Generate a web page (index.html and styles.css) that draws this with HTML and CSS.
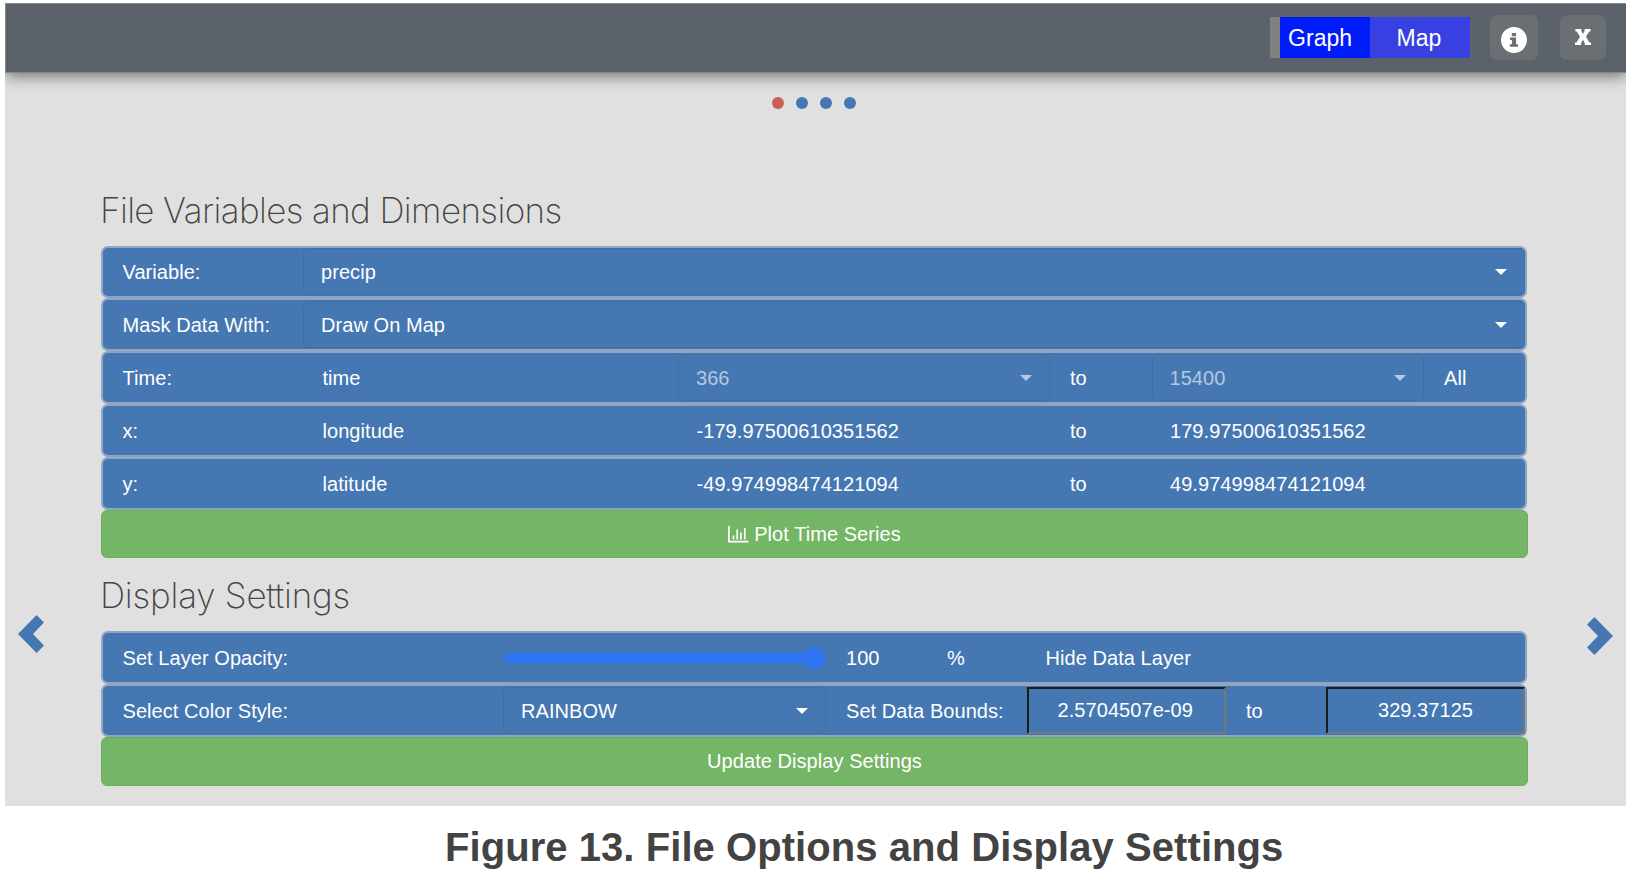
FILE: index.html
```html
<!DOCTYPE html>
<html lang="en">
<head>
<meta charset="utf-8">
<title>File Options and Display Settings</title>
<link rel="stylesheet" href="styles.css">
</head>
<body>
<main class="panel">
  <header class="topbar">
    <div class="toggle">
      <span class="toggle-graph">Graph</span>
      <span class="toggle-map">Map</span>
    </div>
    <button class="icon-btn info-btn" aria-label="Info">
      <svg width="26" height="26" viewBox="0 0 26 26"><circle cx="13" cy="13" r="13" fill="#fff"/><path d="M10.8 6h4.3v3.2h-4.3zM9 10.6h6.1v6.6H17v2.5H8.8v-2.5h2.1v-4.1H9z" fill="#6a6f73"/></svg>
    </button>
    <button class="icon-btn close-btn" aria-label="Close">
      <svg width="16" height="16" viewBox="0 0 16 16"><path d="M0.4 0h6v2L8 4.9 9.6 2V0h5.9v2.4h-1.3L11 7.8l3.4 5.6H16V16H9.8v-2L8 10.8 6.2 14v2H0v-2.6h1.5L5 7.8 1.8 2.4H.4z" fill="#fff"/></svg>
    </button>
  </header>

  <nav class="dots"><i class="dot dot-active"></i><i class="dot"></i><i class="dot"></i><i class="dot"></i></nav>

  <div class="slide">
    <svg class="arrow arrow-prev" width="26" height="38" viewBox="0 0 26 38"><path d="M18.6 0L26 7.6 15 19l11 11.4-7.4 7.6L0 19z"/></svg>
    <div class="content">
      <h2>File Variables and Dimensions</h2>
      <div class="row row-select">
        <span class="label">Variable:</span>
        <div class="select">precip<i class="caret"></i></div>
      </div>
      <div class="row row-select">
        <span class="label">Mask Data With:</span>
        <div class="select">Draw On Map<i class="caret"></i></div>
      </div>
      <div class="row row-dim">
        <span class="label">Time:</span><span class="label">time</span>
        <div class="select disabled">366<i class="caret"></i></div>
        <span class="to">to</span>
        <div class="select disabled">15400<i class="caret"></i></div>
        <span class="to">All</span>
      </div>
      <div class="row row-dim">
        <span class="label">x:</span><span class="label">longitude</span>
        <span class="value">-179.97500610351562</span><span class="to">to</span><span class="value">179.97500610351562</span>
      </div>
      <div class="row row-dim">
        <span class="label">y:</span><span class="label">latitude</span>
        <span class="value">-49.974998474121094</span><span class="to">to</span><span class="value">49.974998474121094</span>
      </div>
      <button class="action">
        <svg width="21" height="17" viewBox="0 0 21 17"><path d="M.9 0v15.6H20.5M5.5 13.4V9.4M9.2 13.4V3.5M12.9 13.4V6.5M16.8 13.4V2" fill="none" stroke="#fff" stroke-width="1.7"/></svg>
        <span>Plot Time Series</span>
      </button>

      <h2 class="second">Display Settings</h2>
      <div class="row row-opacity">
        <span class="label">Set Layer Opacity:</span>
        <div class="slider"><i class="thumb"></i></div>
        <span class="to">100</span><span class="to">%</span><span class="to">Hide Data Layer</span>
      </div>
      <div class="row row-style">
        <span class="label">Select Color Style:</span>
        <div class="select">RAINBOW<i class="caret"></i></div>
        <span class="to">Set Data Bounds:</span>
        <div class="bound">2.5704507e-09</div>
        <span class="to">to</span>
        <div class="bound">329.37125</div>
      </div>
      <button class="action">Update Display Settings</button>
    </div>
    <svg class="arrow arrow-next" width="26" height="38" viewBox="0 0 26 38"><path d="M7.4 0L0 7.6 11 19 0 30.4 7.4 38 26 19z"/></svg>
  </div>
</main>
<p class="caption">Figure 13. File Options and Display Settings</p>
</body>
</html>
```
FILE: styles.css
```css
* { box-sizing: border-box; }
body {
  margin: 0;
  width: 1634px;
  height: 884px;
  overflow: hidden;
  background: #fff;
  color: #fff;
  font: 20px/1 "Liberation Sans", Arial, sans-serif;
  letter-spacing: .06px;
}
button { border: 0; padding: 0; color: inherit; font: inherit; letter-spacing: inherit; }
.panel { width: 1621px; height: 803px; margin: 3px 0 0 5px; background: #e0e0e0; }
.topbar {
  display: flex;
  align-items: flex-start;
  justify-content: flex-end;
  height: 70px;
  padding: 11px 20px 0 0;
  background: #5b6269;
  border: 1px solid #85898d;
  border-right: 0;
  box-shadow: 0 3px 14px rgba(0, 0, 0, .5);
  clip-path: inset(0 0 -30px 0);
}
.toggle { display: flex; height: 41px; margin: 2px 20px 0 0; border-left: 10px solid #808080; font-size: 23px; line-height: 42px; }
.toggle-graph { width: 90px; padding-left: 8px; background: #001cf8; }
.toggle-map { width: 100px; padding-right: 2px; text-align: center; background: #3840e2; }
.icon-btn { display: flex; justify-content: center; height: 45px; border-radius: 7px; background: #6a6f73; }
.info-btn { width: 48px; margin-right: 22px; padding-top: 12px; }
.close-btn { width: 46px; padding-top: 14px; }

.dots { display: flex; justify-content: center; gap: 12px; height: 92px; padding: 24px 0 0 0; margin-left: -3px; }
.dot { width: 12px; height: 12px; border-radius: 50%; background: #4577b2; }
.dot-active { background: #cb5f53; }

.slide { display: flex; }
.arrow { flex: none; fill: #4577b2; }
.arrow-prev { margin: 450px 57px 0 13px; }
.arrow-next { margin: 452px 0 0 60px; }
.content { width: 1426px; }
h2 {
  margin: 0 0 0 -1px;
  height: 80.5px;
  padding-top: 25px;
  color: #444;
  font: 200 35px/40px Inter, "Liberation Sans", sans-serif;
  letter-spacing: -.62px;
  white-space: nowrap;
}
h2.second { height: 73px; padding-top: 17px; letter-spacing: -.2px; }

.row {
  display: grid;
  align-items: center;
  height: 52.9px;
  background: #4577b2;
  border: 2px solid #8fa5c2;
  border-radius: 7px;
}
.row-select { grid-template-columns: 200px 1fr; }
.row-dim { grid-template-columns: 200px 375px 372px 101.5px 272.5px 1fr; }
.row-opacity { grid-template-columns: 400px 323px 101px 98.5px 1fr; }
.row-style { grid-template-columns: 400px 323px 200.5px 199.5px 100px 199px; }
.label { padding-left: 19.5px; }
.to { padding-left: 20px; }
.value { padding-left: 18.5px; }
.select {
  display: flex;
  align-items: center;
  justify-content: space-between;
  height: 47px;
  padding: 0 17px;
  border: 1px solid #3f6fa6;
  border-radius: 6px;
}
.caret { border: 6px solid transparent; border-top-color: #fff; border-bottom: 0; }
.disabled { color: #b4c8e0; }
.disabled .caret { border-top-color: #b4c8e0; }
.slider { display: flex; align-items: center; justify-content: flex-end; height: 10px; border-radius: 5px; background: #2f76f6; margin: 0 1px; }
.thumb { width: 22px; height: 22px; border-radius: 50%; background: #2f76f6; }
.bound { height: 47px; padding-right: 2px; text-align: center; line-height: 43px; border: 2px solid; border-color: #1b1b1b #767676 #767676 #1b1b1b; }
.bound:last-child { padding-right: 0; }

.action {
  display: flex;
  align-items: center;
  justify-content: center;
  gap: 5px;
  width: 1427px;
  height: 48.5px;
  background: #75b566;
  border: 1px solid #6bae5d;
  border-radius: 6px;
}
.caption { margin: 18px 0 0 445px; color: #434343; font-weight: bold; font-size: 40px; line-height: 46px; white-space: nowrap; }
```
